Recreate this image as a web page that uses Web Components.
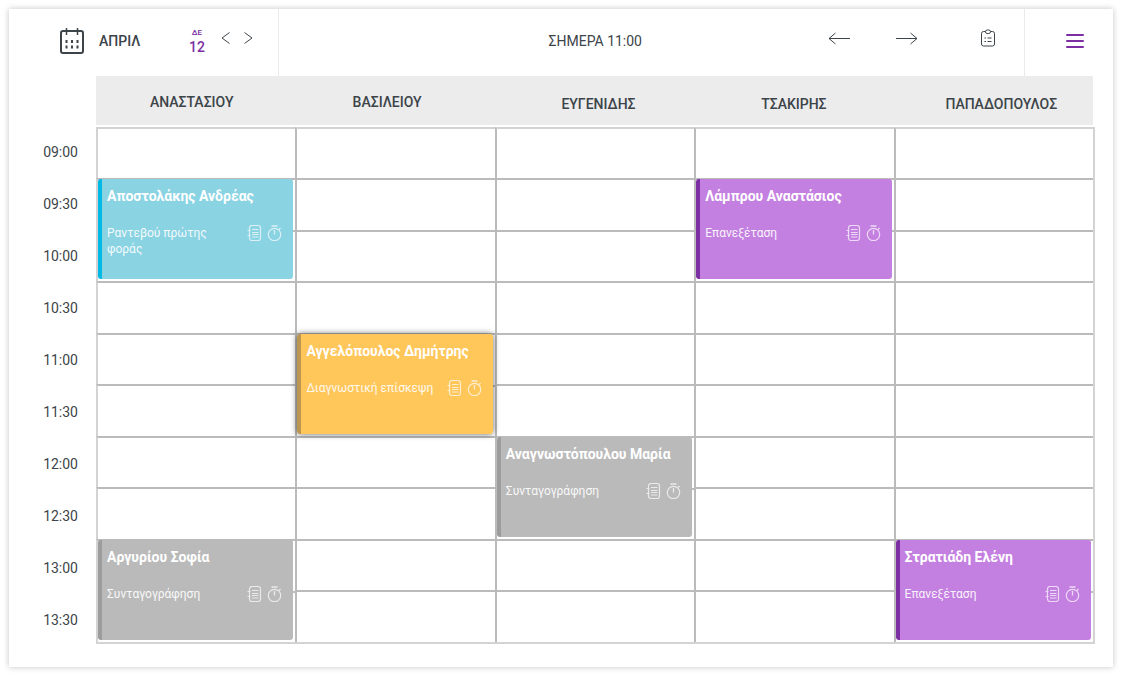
<!DOCTYPE html>
<html lang="el">
<head>
<meta charset="utf-8">
<meta name="viewport" content="width=device-width, initial-scale=1">
<title>Πρόγραμμα ραντεβού</title>
<style>
  body {
    margin: 0;
    padding: 9px;
    background: #fff;
    color: #3c4449;
    font-family: Roboto, "Noto Sans", sans-serif;
    font-size: 14px;
    line-height: 16px;
  }
</style>
</head>
<body>
<schedule-page>
  <schedule-toolbar slot="toolbar" month="ΑΠΡΙΛ" weekday="ΔΕ" day="12">ΣΗΜΕΡΑ 11:00</schedule-toolbar>
  <time-axis slot="axis" from="9" slots="10"></time-axis>
  <schedule-grid></schedule-grid>
</schedule-page>

<script>
class SchedulePage extends HTMLElement {
  constructor() {
    super();
    this.attachShadow({ mode: 'open' }).innerHTML = `
      <style>
        :host { display: block; background: #fff; box-shadow: 0 0 6px rgba(0,0,0,.24); }
        main { display: grid; grid-template-columns: 87px 1fr; align-items: start; padding: 0 20px 21px 0; }
      </style>
      <slot name="toolbar"></slot>
      <main><slot name="axis"></slot><slot></slot></main>`;
  }
}

class ScheduleToolbar extends HTMLElement {
  constructor() {
    super();
    this.attachShadow({ mode: 'open' }).innerHTML = `
      <style>
        :host { display: block; }
        header { display: grid; grid-template-columns: 269px 1fr 88px; height: 67px; }
        header > div { display: flex; align-items: center; box-sizing: border-box; padding-bottom: 3px; }
        .date { padding-left: 51px; }
        .month { margin-left: 15px; font-weight: 500; width: 89px; }
        .day { display: flex; flex-direction: column; align-items: center; color: #7b2fa3; font-weight: 500; width: 18px; }
        .day small { font-size: 8px; line-height: 12px; }
        .steps { display: flex; gap: 8px; margin-left: 12px; padding-bottom: 6px; }
        .now { border: solid #eaeaea; border-width: 0 1px; }
        .now time { flex: 1; text-align: right; }
        .tools { display: flex; align-items: center; justify-content: flex-end; width: 382px; box-sizing: border-box; padding: 0 28px 6px 0; }
        .tools button + button { margin-left: 44px; }
        .tools button.notes { margin-left: 61px; }
        .menu { justify-content: center; padding-left: 12px; }
        button { appearance: none; border: 0; background: none; padding: 0; margin: 0; color: inherit; display: block; cursor: pointer; }
        .menu button { color: #7b2fa3; }
        svg { display: block; fill: none; stroke: currentColor; }
      </style>
      <header>
        <div class="date">
          <svg width="24" height="28" viewBox="0 0 24 28" stroke-width="2" aria-hidden="true">
            <rect x="1" y="4" width="22" height="22" rx="2"/>
            <path d="M6.500 1v7M17.500 1v7" stroke-width="1.500"/>
            <path d="M6.500 13v3M12 13v3M17.500 13v3M6.500 18.500v3M12 18.500v3M17.500 18.500v3"/>
          </svg>
          <span class="month"></span>
          <span class="day"><small></small><span class="num"></span></span>
          <div class="steps">
            <button aria-label="Προηγούμενη ημέρα"><svg width="15" height="14" viewBox="0 0 15 14"><path d="M11.500 1.500 4 7l7.500 5.500"/></svg></button>
            <button aria-label="Επόμενη ημέρα"><svg width="15" height="14" viewBox="0 0 15 14"><path d="M3.500 1.500 11 7l-7.500 5.500"/></svg></button>
          </div>
        </div>
        <div class="now">
          <time><slot></slot></time>
          <div class="tools">
            <button aria-label="Πίσω"><svg width="24" height="14" viewBox="0 0 24 14"><path d="M23 7.500H2M8.500 2 2 7.500 8.500 13"/></svg></button>
            <button aria-label="Εμπρός"><svg width="24" height="14" viewBox="0 0 24 14"><path d="M1 7.500h21M15.500 2 22 7.500 15.500 13"/></svg></button>
            <button class="notes" aria-label="Σημειώσεις"><svg width="16" height="18" viewBox="0 0 16 18"><path d="M5.500 2.500h-2A2 2 0 0 0 1.500 4.500v10.500a2 2 0 0 0 2 2h9a2 2 0 0 0 2-2V4.500a2 2 0 0 0-2-2h-2"/><rect x="5.500" y="1" width="5" height="3.500" rx="1.700"/><path d="M4.500 9h1.500M7.500 9h4M4.500 12.500h1.500M7.500 12.500h4"/></svg></button>
          </div>
        </div>
        <div class="menu">
          <button aria-label="Μενού"><svg width="18" height="16" viewBox="0 0 18 16" stroke-width="2" stroke-linecap="round"><path d="M1 2h16M1 8h16M1 14h16"/></svg></button>
        </div>
      </header>`;
  }
  connectedCallback() {
    const q = s => this.shadowRoot.querySelector(s);
    q('.month').textContent = this.getAttribute('month');
    q('small').textContent = this.getAttribute('weekday');
    q('.num').textContent = this.getAttribute('day');
  }
}

class TimeAxis extends HTMLElement {
  connectedCallback() {
    const from = Number(this.getAttribute('from'));
    let items = '';
    for (let i = 0; i < Number(this.getAttribute('slots')); i++) {
      const hour = String(from + Math.floor(i / 2)).padStart(2, '0');
      items += `<li>${hour}:${i % 2 ? '30' : '00'}</li>`;
    }
    this.attachShadow({ mode: 'open' }).innerHTML = `
      <style>
        :host { display: block; padding-top: 50px; }
        ol { list-style: none; margin: 0; padding: 0; }
        li { height: 52px; line-height: 52px; text-align: right; padding-right: 18px; }
      </style>
      <ol>${items}</ol>`;
  }
}

class AppointmentCard extends HTMLElement {
  constructor() {
    super();
    this.attachShadow({ mode: 'open' }).innerHTML = `
      <style>
        :host { display: block; box-sizing: border-box; height: 100px; margin: -1px 2px 0 0; padding: 9px 11px 0 9px;
          color: #fff; border-radius: 3px; background: linear-gradient(to right, var(--edge) 4px, var(--fill) 4px); }
        :host([kind="first"]) { --fill: #89d3e3; --edge: #00b9e4; }
        :host([kind="exam"]) { --fill: #c480e0; --edge: #7b2fa3; }
        :host([kind="rx"]) { --fill: #bababa; --edge: #9c9c9c; }
        :host([kind="visit"]) { --fill: #ffc65a; --edge: #bb9650; position: relative; box-shadow: 0 0 6px rgba(0,0,0,.6); }
        h3 { margin: 0; font-size: 14px; line-height: 16px; font-weight: 700; white-space: nowrap; }
        .row { display: flex; align-items: flex-start; margin-top: 21px; }
        p { margin: 0 8px 0 0; flex: 1; font-size: 12px; line-height: 16px; opacity: .9; }
        svg { display: block; flex: none; fill: none; stroke: #fff; opacity: .7; }
        .timer { margin-left: 5px; }
      </style>
      <h3><slot></slot></h3>
      <div class="row">
        <p><slot name="reason"></slot></p>
        <svg width="15" height="16" viewBox="0 0 15 16" aria-hidden="true"><rect x="2.500" y=".5" width="11" height="15" rx="2.500" stroke-width="1.200"/><path d="M5 4.500h6.500M5 7.500h6.500M5 9.500h6.500M5 12h6.500M.5 5.500h3M.5 10.500h3"/></svg>
        <svg class="timer" width="15" height="16" viewBox="0 0 15 16" aria-hidden="true"><circle cx="7.500" cy="9.500" r="6.200" stroke-width="1.200"/><path d="M4.500 1h6M7.500 5v4.500M12 4.500l1.500-1.500" stroke-width="1.300"/></svg>
      </div>`;
  }
}

class ScheduleGrid extends HTMLElement {
  connectedCallback() {
    const doctors = ['ΑΝΑΣΤΑΣΙΟΥ', 'ΒΑΣΙΛΕΙΟΥ', 'ΕΥΓΕΝΙΔΗΣ', 'ΤΣΑΚΙΡΗΣ', 'ΠΑΠΑΔΟΠΟΥΛΟΣ'];
    const visits = [
      { col: 0, row: 1, kind: 'first', name: 'Αποστολάκης Ανδρέας', reason: 'Ραντεβού πρώτης φοράς' },
      { col: 3, row: 1, kind: 'exam', name: 'Λάμπρου Αναστάσιος', reason: 'Επανεξέταση' },
      { col: 1, row: 4, kind: 'visit', name: 'Αγγελόπουλος Δημήτρης', reason: 'Διαγνωστική επίσκεψη' },
      { col: 2, row: 6, kind: 'rx', name: 'Αναγνωστόπουλου Μαρία', reason: 'Συνταγογράφηση' },
      { col: 0, row: 8, kind: 'rx', name: 'Αργυρίου Σοφία', reason: 'Συνταγογράφηση' },
      { col: 4, row: 8, kind: 'exam', name: 'Στρατιάδη Ελένη', reason: 'Επανεξέταση' }
    ];
    let rows = '';
    for (let r = 0; r < 10; r++) {
      rows += '<tr>';
      for (let c = 0; c < doctors.length; c++) {
        // An appointment takes two half-hour slots, so the second slot has no cell of its own.
        if (visits.some(v => v.col === c && v.row === r - 1)) continue;
        const v = visits.find(v => v.col === c && v.row === r);
        const cls = c === 0 ? ' class="edge"' : '';
        rows += v
          ? `<td${cls} rowspan="2"><appointment-card kind="${v.kind}">${v.name}<span slot="reason">${v.reason}</span></appointment-card></td>`
          : `<td${cls}></td>`;
      }
      rows += '</tr>';
    }
    this.attachShadow({ mode: 'open' }).innerHTML = `
      <style>
        :host { display: block; }
        table { width: 100%; table-layout: fixed; border-collapse: separate; border-spacing: 0; }
        th { box-sizing: border-box; height: 51px; padding: 6px 0 0; font-weight: 500; text-align: center; vertical-align: middle;
          background: #ececec padding-box; border-bottom: 2px solid #fff; }
        th:nth-child(-n+2) { padding: 3px 8px 0 0; }
        th:nth-child(2) { padding-right: 16px; }
        th:nth-child(3) { padding-left: 8px; }
        th:last-child { padding-left: 16px; }
        tbody tr { height: 51px; }
        tbody tr:nth-child(even) { height: 52px; }
        td { box-sizing: border-box; padding: 0; vertical-align: top; border: solid #bbb; border-width: 2px 0 0 2px; }
        td.edge { border-left-color: #d3d3d3; }
        td[rowspan] { background: linear-gradient(#bbb, #bbb) 0 50px / 100% 2px no-repeat; }
        tbody tr:first-child td { border-top-color: #d3d3d3; }
        tbody { box-shadow: 2px 0 #d3d3d3, 0 2px #d3d3d3, 2px 2px #d3d3d3; }
      </style>
      <table aria-label="Ραντεβού ανά γιατρό">
        <thead><tr>${doctors.map(d => `<th scope="col">${d}</th>`).join('')}</tr></thead>
        <tbody>${rows}</tbody>
      </table>`;
  }
}

customElements.define('schedule-page', SchedulePage);
customElements.define('schedule-toolbar', ScheduleToolbar);
customElements.define('time-axis', TimeAxis);
customElements.define('appointment-card', AppointmentCard);
customElements.define('schedule-grid', ScheduleGrid);
</script>
</body>
</html>
